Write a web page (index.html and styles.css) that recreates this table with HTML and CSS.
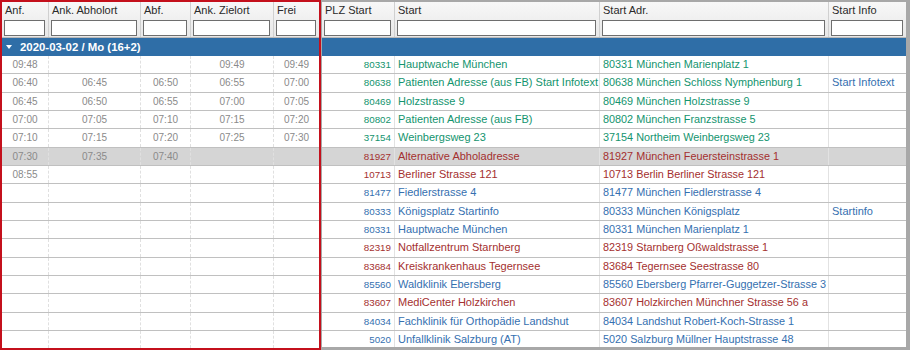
FILE: index.html
```html
<!DOCTYPE html>
<html lang="de">
<head>
<meta charset="utf-8">
<title>Fahrten</title>
<link rel="stylesheet" href="styles.css">
</head>
<body>
<div class="grid">
  <div class="pane pane-left">
    <div class="head">
      <div class="hcell w-anf"><div class="hlabel">Anf.</div><div class="hfilter"><input type="text"></div></div>
      <div class="hcell w-abh"><div class="hlabel">Ank. Abholort</div><div class="hfilter"><input type="text"></div></div>
      <div class="hcell w-abf"><div class="hlabel">Abf.</div><div class="hfilter"><input type="text"></div></div>
      <div class="hcell w-ziel"><div class="hlabel">Ank. Zielort</div><div class="hfilter"><input type="text"></div></div>
      <div class="hcell w-frei last"><div class="hlabel">Frei</div><div class="hfilter"><input type="text"></div></div>
    </div>
    <div class="group"><span class="caret"></span><span class="group-label">2020-03-02 / Mo (16+2)</span></div>
    <div class="body">
      <div class="row"><div class="cell w-anf">09:48</div><div class="cell w-abh"></div><div class="cell w-abf"></div><div class="cell w-ziel">09:49</div><div class="cell w-frei last">09:49</div></div>
      <div class="row"><div class="cell w-anf">06:40</div><div class="cell w-abh">06:45</div><div class="cell w-abf">06:50</div><div class="cell w-ziel">06:55</div><div class="cell w-frei last">07:00</div></div>
      <div class="row"><div class="cell w-anf">06:45</div><div class="cell w-abh">06:50</div><div class="cell w-abf">06:55</div><div class="cell w-ziel">07:00</div><div class="cell w-frei last">07:05</div></div>
      <div class="row"><div class="cell w-anf">07:00</div><div class="cell w-abh">07:05</div><div class="cell w-abf">07:10</div><div class="cell w-ziel">07:15</div><div class="cell w-frei last">07:20</div></div>
      <div class="row"><div class="cell w-anf">07:10</div><div class="cell w-abh">07:15</div><div class="cell w-abf">07:20</div><div class="cell w-ziel">07:25</div><div class="cell w-frei last">07:30</div></div>
      <div class="row hl"><div class="cell w-anf">07:30</div><div class="cell w-abh">07:35</div><div class="cell w-abf">07:40</div><div class="cell w-ziel"></div><div class="cell w-frei last"></div></div>
      <div class="row"><div class="cell w-anf">08:55</div><div class="cell w-abh"></div><div class="cell w-abf"></div><div class="cell w-ziel"></div><div class="cell w-frei last"></div></div>
      <div class="row"><div class="cell w-anf"></div><div class="cell w-abh"></div><div class="cell w-abf"></div><div class="cell w-ziel"></div><div class="cell w-frei last"></div></div>
      <div class="row"><div class="cell w-anf"></div><div class="cell w-abh"></div><div class="cell w-abf"></div><div class="cell w-ziel"></div><div class="cell w-frei last"></div></div>
      <div class="row"><div class="cell w-anf"></div><div class="cell w-abh"></div><div class="cell w-abf"></div><div class="cell w-ziel"></div><div class="cell w-frei last"></div></div>
      <div class="row"><div class="cell w-anf"></div><div class="cell w-abh"></div><div class="cell w-abf"></div><div class="cell w-ziel"></div><div class="cell w-frei last"></div></div>
      <div class="row"><div class="cell w-anf"></div><div class="cell w-abh"></div><div class="cell w-abf"></div><div class="cell w-ziel"></div><div class="cell w-frei last"></div></div>
      <div class="row"><div class="cell w-anf"></div><div class="cell w-abh"></div><div class="cell w-abf"></div><div class="cell w-ziel"></div><div class="cell w-frei last"></div></div>
      <div class="row"><div class="cell w-anf"></div><div class="cell w-abh"></div><div class="cell w-abf"></div><div class="cell w-ziel"></div><div class="cell w-frei last"></div></div>
      <div class="row"><div class="cell w-anf"></div><div class="cell w-abh"></div><div class="cell w-abf"></div><div class="cell w-ziel"></div><div class="cell w-frei last"></div></div>
      <div class="row"><div class="cell w-anf"></div><div class="cell w-abh"></div><div class="cell w-abf"></div><div class="cell w-ziel"></div><div class="cell w-frei last"></div></div>
    </div>
  </div>

  <div class="pane pane-right">
    <div class="head">
      <div class="hcell w-plz"><div class="hlabel">PLZ Start</div><div class="hfilter"><input type="text"></div></div>
      <div class="hcell w-start"><div class="hlabel">Start</div><div class="hfilter"><input type="text"></div></div>
      <div class="hcell w-adr"><div class="hlabel">Start Adr.</div><div class="hfilter"><input type="text"></div></div>
      <div class="hcell w-info last"><div class="hlabel">Start Info</div><div class="hfilter"><input type="text"></div></div>
    </div>
    <div class="group"></div>
    <div class="body">
      <div class="row green"><div class="rcell plz w-plz">80331</div><div class="rcell w-start">Hauptwache München</div><div class="rcell adr w-adr">80331 München Marienplatz 1</div><div class="rcell info w-info"></div></div>
      <div class="row green"><div class="rcell plz w-plz">80638</div><div class="rcell w-start">Patienten Adresse (aus FB) Start Infotext</div><div class="rcell adr w-adr">80638 München Schloss Nymphenburg 1</div><div class="rcell info w-info">Start Infotext</div></div>
      <div class="row green"><div class="rcell plz w-plz">80469</div><div class="rcell w-start">Holzstrasse 9</div><div class="rcell adr w-adr">80469 München Holzstrasse 9</div><div class="rcell info w-info"></div></div>
      <div class="row green"><div class="rcell plz w-plz">80802</div><div class="rcell w-start">Patienten Adresse (aus FB)</div><div class="rcell adr w-adr">80802 München Franzstrasse 5</div><div class="rcell info w-info"></div></div>
      <div class="row green"><div class="rcell plz w-plz">37154</div><div class="rcell w-start">Weinbergsweg 23</div><div class="rcell adr w-adr">37154 Northeim Weinbergsweg 23</div><div class="rcell info w-info"></div></div>
      <div class="row red hl"><div class="rcell plz w-plz">81927</div><div class="rcell w-start">Alternative Abholadresse</div><div class="rcell adr w-adr">81927 München Feuersteinstrasse 1</div><div class="rcell info w-info"></div></div>
      <div class="row red"><div class="rcell plz w-plz">10713</div><div class="rcell w-start">Berliner Strasse 121</div><div class="rcell adr w-adr">10713 Berlin Berliner Strasse 121</div><div class="rcell info w-info"></div></div>
      <div class="row blue"><div class="rcell plz w-plz">81477</div><div class="rcell w-start">Fiedlerstrasse 4</div><div class="rcell adr w-adr">81477 München Fiedlerstrasse 4</div><div class="rcell info w-info"></div></div>
      <div class="row blue"><div class="rcell plz w-plz">80333</div><div class="rcell w-start">Königsplatz Startinfo</div><div class="rcell adr w-adr">80333 München Königsplatz</div><div class="rcell info w-info">Startinfo</div></div>
      <div class="row blue"><div class="rcell plz w-plz">80331</div><div class="rcell w-start">Hauptwache München</div><div class="rcell adr w-adr">80331 München Marienplatz 1</div><div class="rcell info w-info"></div></div>
      <div class="row red"><div class="rcell plz w-plz">82319</div><div class="rcell w-start">Notfallzentrum Starnberg</div><div class="rcell adr w-adr">82319 Starnberg Oßwaldstrasse 1</div><div class="rcell info w-info"></div></div>
      <div class="row red"><div class="rcell plz w-plz">83684</div><div class="rcell w-start">Kreiskrankenhaus Tegernsee</div><div class="rcell adr w-adr">83684 Tegernsee Seestrasse 80</div><div class="rcell info w-info"></div></div>
      <div class="row blue"><div class="rcell plz w-plz">85560</div><div class="rcell w-start">Waldklinik Ebersberg</div><div class="rcell adr w-adr">85560 Ebersberg Pfarrer-Guggetzer-Strasse 3</div><div class="rcell info w-info"></div></div>
      <div class="row red"><div class="rcell plz w-plz">83607</div><div class="rcell w-start">MediCenter Holzkirchen</div><div class="rcell adr w-adr">83607 Holzkirchen Münchner Strasse 56 a</div><div class="rcell info w-info"></div></div>
      <div class="row blue"><div class="rcell plz w-plz">84034</div><div class="rcell w-start">Fachklinik für Orthopädie Landshut</div><div class="rcell adr w-adr">84034 Landshut Robert-Koch-Strasse 1</div><div class="rcell info w-info"></div></div>
      <div class="row blue"><div class="rcell plz w-plz">5020</div><div class="rcell w-start">Unfallklinik Salzburg (AT)</div><div class="rcell adr w-adr">5020 Salzburg Müllner Hauptstrasse 48</div><div class="rcell info w-info"></div></div>
    </div>
  </div>
</div>
</body>
</html>
```

FILE: styles.css
```css
html, body {
  margin: 0;
  padding: 0;
  background: #ffffff;
}

body {
  font-family: "Liberation Sans", Arial, Helvetica, sans-serif;
}

.grid {
  display: flex;
  align-items: flex-start;
  gap: 1px;
  width: 910px;
  height: 350px;
  box-sizing: border-box;
  padding: 0 4px 0 0;
  background: #a8a8a8;
  overflow: hidden;
}

.pane {
  background: #ffffff;
  overflow: hidden;
  box-sizing: border-box;
}

.pane-left {
  flex: none;
  width: 321px;
  height: 350px;
  border: 2px solid #c4101c;
}

.pane-right {
  flex: 1;
  margin-top: 2px;
  height: 345px;
}

/* column widths */
.w-anf  { width: 47px; }
.w-abh  { width: 92px; }
.w-abf  { width: 50px; }
.w-ziel { width: 83px; }
.w-frei { width: 45px; }

.w-plz   { width: 73px; }
.w-start { width: 205px; }
.w-adr   { width: 229px; }
.w-info  { width: 77px; }

/* header */
.head {
  display: flex;
  height: 36px;
  box-sizing: border-box;
  background: linear-gradient(#f8f8f8, #e7e7e7);
  border-bottom: 1px solid #b9b9b9;
}

.hcell {
  flex: none;
  display: flex;
  flex-direction: column;
  box-sizing: border-box;
  border-right: 1px solid #d0d0d0;
}

.hcell.last {
  border-right: none;
}

.hlabel {
  height: 17px;
  line-height: 17px;
  padding-left: 3px;
  font-size: 11px;
  color: #2a2a2a;
  white-space: nowrap;
  overflow: hidden;
}

.hfilter {
  height: 18px;
  box-sizing: border-box;
  padding: 1px 3px 0 2px;
}

.hfilter input {
  display: block;
  width: 100%;
  height: 16px;
  box-sizing: border-box;
  margin: 0;
  padding: 0;
  border: 1px solid #6e6e6e;
  border-radius: 0;
  background: #ffffff;
  outline: none;
}

/* group row */
.group {
  display: flex;
  align-items: center;
  height: 18px;
  background: #2f6ea7;
  color: #ffffff;
}

.caret {
  width: 0;
  height: 0;
  margin: 0 8px 0 4px;
  border-left: 3px solid transparent;
  border-right: 3px solid transparent;
  border-top: 4px solid #ffffff;
}

.group-label {
  font-size: 11.4px;
  font-weight: bold;
  white-space: nowrap;
}

/* rows */
.row {
  display: flex;
  height: 18.33px;
  box-sizing: border-box;
  border-bottom: 1px solid #c0c0c0;
  background: #ffffff;
}

.row.hl {
  background: #d5d5d5;
}

.cell {
  flex: none;
  box-sizing: border-box;
  border-right: 1px dashed #e0e0e0;
  line-height: 17px;
  font-size: 10px;
  color: #8a8a8a;
  text-align: center;
  white-space: nowrap;
  overflow: hidden;
}

.cell.last {
  border-right: none;
}

.rcell {
  flex: none;
  box-sizing: border-box;
  border-right: 1px solid #e2e2e2;
  line-height: 17px;
  font-size: 11px;
  padding-left: 3px;
  white-space: nowrap;
  overflow: hidden;
}

.rcell.adr {
  font-size: 10.85px;
}

.rcell.plz {
  font-size: 9.8px;
  text-align: right;
  padding-left: 0;
  padding-right: 3px;
}

.rcell.info {
  border-right: none;
  color: #3570b0;
}

.row.green .rcell { color: #13946e; }
.row.red .rcell { color: #a4302f; }
.row.blue .rcell { color: #3570b0; }
.row .rcell.info { color: #3570b0; }
```
